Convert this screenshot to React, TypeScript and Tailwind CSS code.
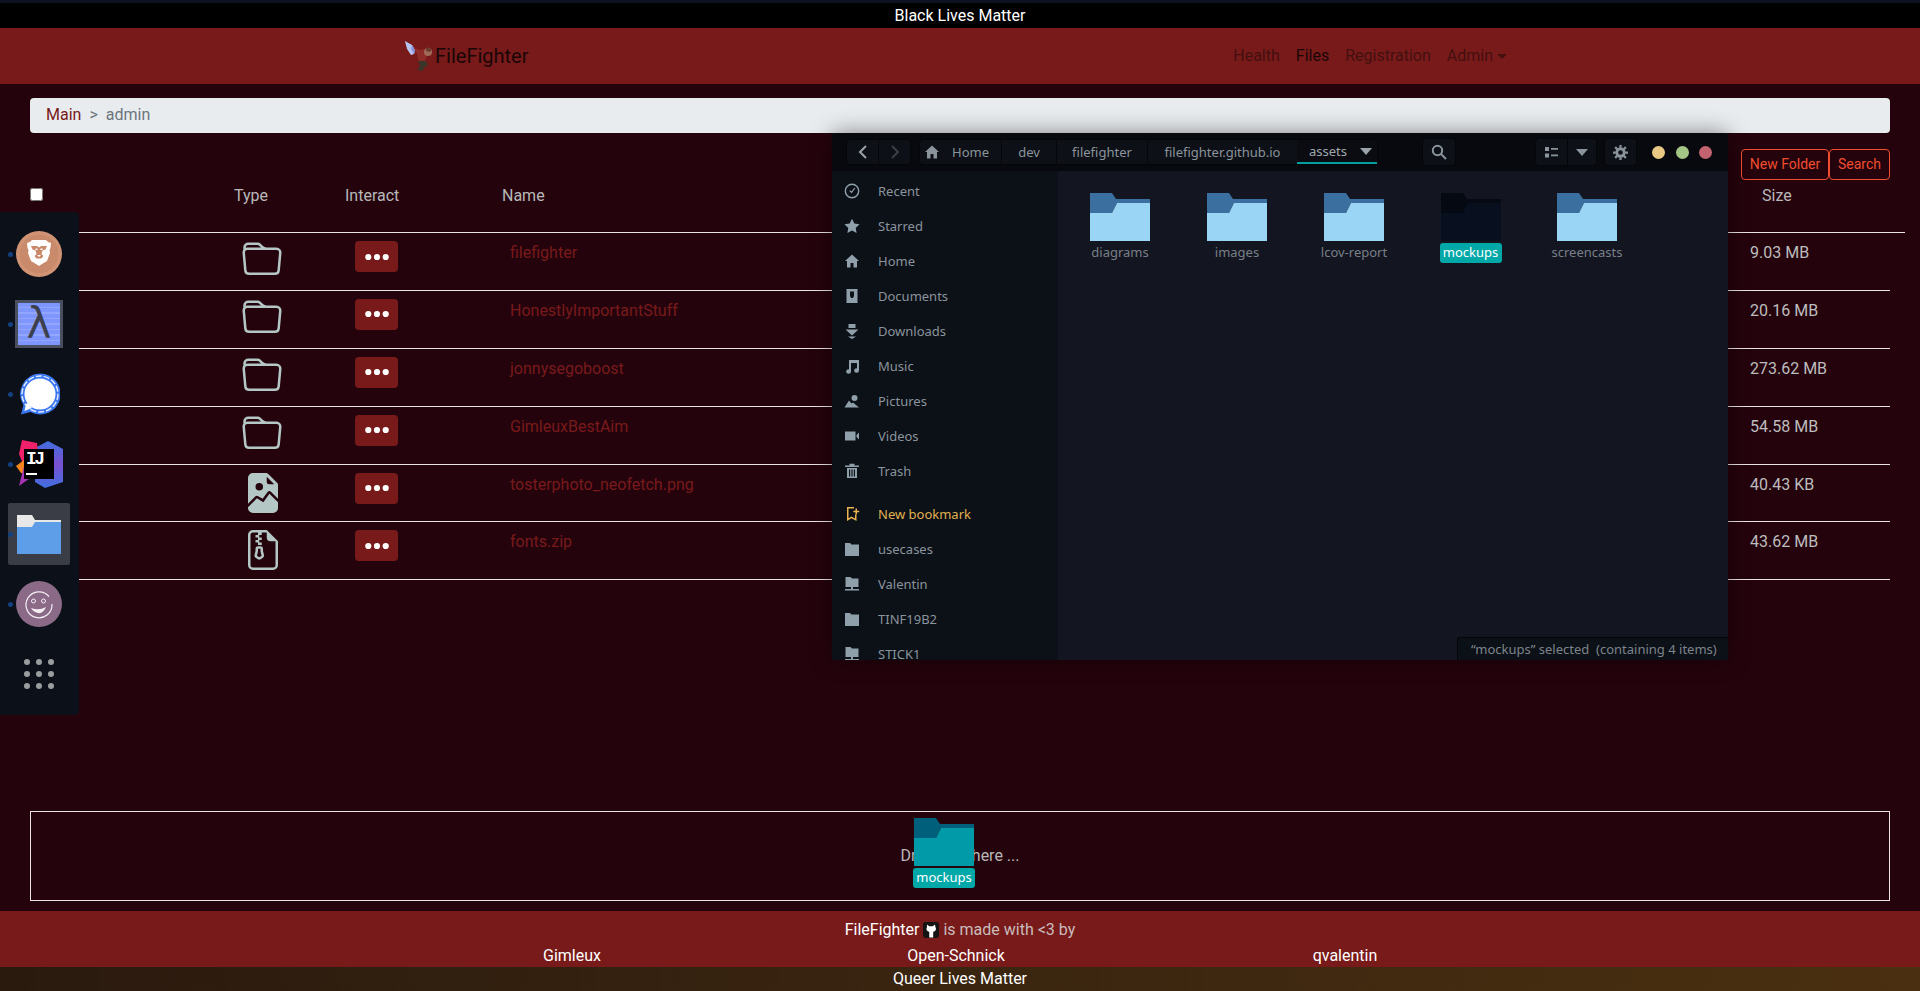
import React from 'react';
import { BsFolder, BsFileEarmarkImageFill, BsFileEarmarkZip } from 'react-icons/bs';

const rows = [
  { name: 'filefighter', size: '9.03 MB', type: 'folder' },
  { name: 'HonestlyImportantStuff', size: '20.16 MB', type: 'folder' },
  { name: 'jonnysegoboost', size: '273.62 MB', type: 'folder' },
  { name: 'GimleuxBestAim', size: '54.58 MB', type: 'folder' },
  { name: 'tosterphoto_neofetch.png', size: '40.43 KB', type: 'image' },
  { name: 'fonts.zip', size: '43.62 MB', type: 'zip' },
];

const FolderGlyph: React.FC<{ back: string; front: string }> = ({ back, front }) => (
  <svg width="60" height="48" viewBox="0 0 60 48" className="block">
    <polygon fill={back} points="0,0 22,0 26,6 60,6 60,10 27,10 22,20 0,20" />
    <polygon fill={front} points="0,20 22,20 27,10 60,10 60,48 0,48" />
  </svg>
);

const Glyph: React.FC<{ children: React.ReactNode; size?: number; color?: string }> = ({ children, size = 16, color = '#8fa0ab' }) => (
  <svg width={size} height={size} viewBox="0 0 16 16" fill={color} stroke="none" className="block">
    {children}
  </svg>
);

const HomePath = () => <path d="M8 1.5 1 8h2v6.5h3.5V10h3v4.5H13V8h2z" />;
const ServerPath = () => (
  <>
    <path d="M1.5 1h5l1.5 1.5h6.5V11h-13z" />
    <path d="M7 11h2v2H7zM1 13h14v1.5H1z" />
  </>
);

const sideTop: { label: string; icon: React.ReactNode }[] = [
  {
    label: 'Recent',
    icon: (
      <Glyph>
        <circle cx="8" cy="8" r="6.7" fill="none" stroke="#8fa0ab" strokeWidth="1.4" />
        <path d="M5.8 7.8 7.6 9.4 10.8 5" fill="none" stroke="#8fa0ab" strokeWidth="1.2" />
      </Glyph>
    ),
  },
  {
    label: 'Starred',
    icon: (
      <Glyph>
        <path d="M8 .8l2.3 4.8 5.2.7-3.8 3.6.9 5.2L8 12.6l-4.6 2.5.9-5.2L.5 6.3l5.2-.7z" />
      </Glyph>
    ),
  },
  { label: 'Home', icon: <Glyph><HomePath /></Glyph> },
  {
    label: 'Documents',
    icon: (
      <Glyph>
        <path d="M2.5 1h11v14h-11zM6 3.5v4.5l1 2h2l1-2V3.5z" fillRule="evenodd" />
      </Glyph>
    ),
  },
  {
    label: 'Downloads',
    icon: (
      <Glyph>
        <path d="M4.5 1h7v4h-7zM1.5 6.5h13L8 12.5zM4 13.5h8L8 16z" />
      </Glyph>
    ),
  },
  {
    label: 'Music',
    icon: (
      <Glyph>
        <path d="M5 2h10v10.5a2.4 2.2 0 1 1-2-2.1V5H7v8.5a2.4 2.2 0 1 1-2-2.1z" />
      </Glyph>
    ),
  },
  {
    label: 'Pictures',
    icon: (
      <Glyph>
        <circle cx="10.5" cy="5" r="3" />
        <path d="M.5 14.5 5 7.5l2.5 3 1.5-1 6 5z" />
      </Glyph>
    ),
  },
  {
    label: 'Videos',
    icon: (
      <Glyph>
        <path d="M1 3.5h10.5v9H1zM12.5 7l2.5-2.5v7L12.5 9z" />
      </Glyph>
    ),
  },
  {
    label: 'Trash',
    icon: (
      <Glyph>
        <path d="M1 2.5h14v1.4H1zM5.5.8h5v1.7h-5z" />
        <path d="M3 5h10v10H3zM5 6.5v7h1.2v-7zM7.4 6.5v7h1.2v-7zM9.8 6.5v7H11v-7z" fillRule="evenodd" />
      </Glyph>
    ),
  },
];

const sideBottom: { label: string; icon: React.ReactNode; gold?: boolean }[] = [
  {
    label: 'New bookmark',
    gold: true,
    icon: (
      <Glyph color="#e8b450">
        <path d="M3 1h7v1.5H4.5v9.7L7.5 10.5l3.5 2V8.5h1.5V15L7.5 12.3 3 15z" />
        <path d="M11.5 2.5H13v2.2h2.2v1.5H13v2.3h-1.5V6.2H9.3V4.7h2.2z" />
      </Glyph>
    ),
  },
  {
    label: 'usecases',
    icon: (
      <Glyph>
        <path d="M1 2h5l1.5 1.5H15V15H1z" />
      </Glyph>
    ),
  },
  { label: 'Valentin', icon: <Glyph><ServerPath /></Glyph> },
  {
    label: 'TINF19B2',
    icon: (
      <Glyph>
        <path d="M1 2h5l1.5 1.5H15V15H1z" />
      </Glyph>
    ),
  },
  { label: 'STICK1', icon: <Glyph><ServerPath /></Glyph> },
];

const folders = [
  { name: 'diagrams', cell: 'w-[117px] flex flex-col items-center' },
  { name: 'images', cell: 'w-[117px] flex flex-col items-center' },
  { name: 'lcov-report', cell: 'w-[117px] flex flex-col items-center' },
  { name: 'mockups', selected: true, cell: 'w-[116px] flex flex-col items-center' },
  { name: 'screencasts', cell: 'w-[117px] flex flex-col items-center' },
];

const crumbs = ['dev', 'filefighter', 'filefighter.github.io'];

const FileWindow: React.FC = () => (
  <div className="absolute left-[832px] top-[133px] w-[896px] h-[527px] flex flex-col bg-[#131620] shadow-[0_0_22px_rgba(0,0,0,0.45)] rounded-t-[3px] overflow-hidden font-['Noto_Sans',sans-serif] text-[13px] text-[#8a949c]">
    <div className="h-[38px] shrink-0 flex items-center pl-[14px] bg-[#08090e]">
      <div className="w-[65px] h-[26px] flex rounded-[4px] bg-[#0d1016] border border-[#05060a]">
        <div className="w-[32px] flex items-center justify-center border-r border-[#05060a]">
          <svg width="10" height="14" viewBox="0 0 10 14" fill="none" stroke="#9aa3aa" strokeWidth="2"><path d="M8 1 2 7l6 6" /></svg>
        </div>
        <div className="flex-1 flex items-center justify-center">
          <svg width="10" height="14" viewBox="0 0 10 14" fill="none" stroke="#3a4048" strokeWidth="2"><path d="M2 1l6 6-6 6" /></svg>
        </div>
      </div>
      <div className="ml-[8px] w-[459px] h-[26px] flex rounded-[4px] bg-[#0d1016] border border-[#05060a] leading-[24px]">
        <div className="w-[82px] flex items-center pl-[4px] gap-[12px] border-r border-[#05060a]">
          <Glyph size={16} color="#8a949c"><HomePath /></Glyph>
          <span>Home</span>
        </div>
        {crumbs.map((c, i) => (
          <div
            key={c}
            className={
              i === 0
                ? 'w-[55px] text-center border-r border-[#05060a]'
                : i === 1
                ? 'w-[91px] text-center border-r border-[#05060a]'
                : 'w-[149px] text-center'
            }
          >
            {c}
          </div>
        ))}
        <div className="flex-1 flex items-center justify-between pl-[12px] pr-[4px] bg-[#0a0c11] border-b-2 border-[#00a0a0] text-[#a0a8ae]">
          <span>assets</span>
          <svg width="12" height="7" viewBox="0 0 12 7" fill="#9aa3aa" className="mr-[1px]"><path d="M0 0h12L6 7z" /></svg>
        </div>
      </div>
      <div className="ml-[44px] w-[34px] h-[28px] flex items-center justify-center rounded-[4px] bg-[#0d1016] border border-[#05060a]">
        <svg width="16" height="16" viewBox="0 0 16 16" fill="none" stroke="#8a949c" strokeWidth="2"><circle cx="6.5" cy="6.5" r="4.7" /><path d="M10 10l5 5" /></svg>
      </div>
      <div className="ml-[79px] w-[62px] h-[28px] flex rounded-[4px] bg-[#0d1016] border border-[#05060a]">
        <div className="w-[32px] flex items-center justify-center border-r border-[#05060a]">
          <svg width="13" height="11" viewBox="0 0 13 11" fill="#8a949c"><path d="M0 0h4v4H0zM0 6.5h4v4H0zM6 1h7v1.7H6zM6 7.5h7v1.7H6z" /></svg>
        </div>
        <div className="flex-1 flex items-center justify-center">
          <svg width="12" height="7" viewBox="0 0 12 7" fill="#8a949c"><path d="M0 0h12L6 7z" /></svg>
        </div>
      </div>
      <div className="ml-[7px] w-[33px] h-[28px] flex items-center justify-center rounded-[4px] bg-[#0d1016] border border-[#05060a]">
        <svg width="15" height="15" viewBox="0 0 16 16" fill="none" stroke="#8a949c"><circle cx="8" cy="8" r="4" strokeWidth="3" /><path d="M8 0v3M8 13v3M0 8h3M13 8h3M2.3 2.3l2.2 2.2M11.5 11.5l2.2 2.2M2.3 13.7l2.2-2.2M11.5 4.5l2.2-2.2" strokeWidth="2.4" /></svg>
      </div>
      <div className="ml-[15px] flex gap-[10.5px]">
        <span className="w-[13px] h-[13px] rounded-full bg-[#e8c882]" />
        <span className="w-[13px] h-[13px] rounded-full bg-[#a3c585]" />
        <span className="w-[13px] h-[13px] rounded-full bg-[#c26470]" />
      </div>
    </div>
    <div className="flex-1 flex min-h-0">
      <div className="w-[226px] shrink-0 bg-[#0c1017] pt-[2.5px] overflow-hidden">
        {sideTop.map(item => (
          <div key={item.label} className="h-[35px] flex items-center pl-[12px] gap-[18px]">
            {item.icon}
            <span className="pt-[2px]">{item.label}</span>
          </div>
        ))}
        <div className="mt-[8px]">
          {sideBottom.map(item => (
            <div key={item.label} className="h-[35px] flex items-center pl-[12px] gap-[18px]">
              {item.icon}
              <span className={item.gold ? 'pt-[2px] text-[#e0b050]' : 'pt-[2px]'}>{item.label}</span>
            </div>
          ))}
        </div>
      </div>
      <div className="relative flex-1 pt-[22px] pl-[3.5px] flex items-start">
        {folders.map(f => (
          <div key={f.name} className={f.cell}>
            <FolderGlyph back={f.selected ? '#050912' : '#3b6f9f'} front={f.selected ? '#081020' : '#9bd5f5'} />
            <span
              className={
                f.selected
                  ? 'mt-[2px] h-[20px] w-[62px] leading-[19px] text-center rounded-[3px] bg-[#00a8a8] text-white'
                  : 'mt-[2px] h-[20px] leading-[19px] text-[#787f88]'
              }
            >
              {f.name}
            </span>
          </div>
        ))}
        <div className="absolute right-0 bottom-0 w-[271px] h-[23px] pl-[13px] leading-[22px] text-[13px] bg-[#0c1017] border-l border-t border-[#05060a] rounded-tl-[3px] text-[#7d848c] whitespace-nowrap">
          “mockups” selected&nbsp; (containing 4 items)
        </div>
      </div>
    </div>
  </div>
);

const DockSlot: React.FC<{ children: React.ReactNode; active?: boolean }> = ({ children, active }) => (
  <div className="relative h-[70px] w-[78px] flex items-center justify-center">
    {active && <div className="absolute left-[8px] top-[4px] w-[62px] h-[62px] rounded-[2px] bg-[#3a3c46]" />}
    <span className="absolute left-[8px] top-[32.5px] w-[5px] h-[5px] rounded-full bg-[#14407f] z-10" />
    <div className="relative">{children}</div>
  </div>
);

const Dock: React.FC = () => (
  <div className="absolute left-0 top-[212px] w-[79px] h-[503px] pt-[7px] bg-[#0c1018] rounded-r-[4px]">
    <DockSlot>
      <svg width="46" height="46" viewBox="0 0 46 46" className="block">
        <circle cx="23" cy="23" r="23" fill="#d09474" />
        <circle cx="23" cy="23" r="19.5" fill="#c98a6b" />
        <path d="M16 9h14l2 2 3 1-.5 5-1 2 .5 3-3 8-5 3-3 2-3-2-5-3-3-8 .5-3-1-2-.5-5 3-1z" fill="#fff" />
        <path d="M15 15h6l2 1.500 2-1.500h6l-1.500 3.500-3 1-1 3.500 2 2-2 2.500h-5l-2-2.500 2-2-1-3.500-3-1z" fill="#c98a6b" />
        <path d="M19.500 17.500h2v1.500h-2zM24.500 17.500h2v1.500h-2zM21 24h4l-2 2z" fill="#fff" />
      </svg>
    </DockSlot>
    <DockSlot>
      <div className="w-[48px] h-[48px] border-[3px] border-[#4a4f60] bg-[repeating-linear-gradient(180deg,#7f96ff_0,#7f96ff_4px,#93a6ff_4px,#93a6ff_5.5px)] flex items-center justify-center text-[42px] leading-none text-[#3c3f4c] font-['DejaVu_Sans',sans-serif]">
        λ
      </div>
    </DockSlot>
    <DockSlot>
      <svg width="42" height="42" viewBox="0 0 42 42" className="block">
        <path d="M22 0.500a20.500 20.500 0 1 1-9.500 38.600L3 41.500l2.400-9.500A20.500 20.500 0 0 1 22 0.500z" fill="#3a76f0" />
        <circle cx="22" cy="21" r="18" fill="none" stroke="#dfe9ff" strokeWidth="1.500" strokeDasharray="6 2" />
        <circle cx="22" cy="21" r="15.500" fill="#fff" />
        <path d="M6.500 38 8 31l2-1 4 5z" fill="#fff" />
      </svg>
    </DockSlot>
    <DockSlot>
      <div className="relative w-[48px] h-[48px]">
        <svg width="48" height="48" viewBox="0 0 48 48" className="absolute inset-0">
          <defs>
            <linearGradient id="ijBlue" x1="0" y1="0" x2="0" y2="1">
              <stop offset="0" stopColor="#3f6fe0" />
              <stop offset="0.5" stopColor="#7a4fd0" />
              <stop offset="1" stopColor="#3f6fe0" />
            </linearGradient>
          </defs>
          <polygon points="33,1 48,9 48,42 30,48 20,42 20,8" fill="url(#ijBlue)" />
          <polygon points="7,0 22,3 24,20 8,24 4,14" fill="#f0206a" />
          <polygon points="1,26 9,20 10,34 6,33" fill="#f7851e" />
          <polygon points="4,46 9,26 18,36" fill="#a535b5" />
        </svg>
        <div className="absolute left-[9px] top-[9px] w-[30px] h-[30px] bg-black text-white font-['Liberation_Mono',monospace] font-bold text-[18px] tracking-[-2.5px] leading-[16px] pl-[2px] pt-[2px]">
          IJ
          <div className="w-[11px] h-[1.5px] mt-[6px] bg-white" />
        </div>
      </div>
    </DockSlot>
    <DockSlot active>
      <svg width="44" height="39" viewBox="0 0 44 39" className="block">
        <polygon fill="#e8e8e8" points="0,0 15,0 18,5 44,5 44,7 15,12 0,12" />
        <polygon fill="#5e9ee8" points="0,12 15,12 18,7 44,7 44,39 0,39" />
      </svg>
    </DockSlot>
    <DockSlot>
      <svg width="46" height="46" viewBox="0 0 46 46" className="block">
        <circle cx="23" cy="23" r="23" fill="#8b6a88" />
        <path d="M33 15.500A13 13 0 1 0 36 23" fill="none" stroke="#f4eef4" strokeWidth="1.200" />
        <circle cx="17.500" cy="20" r="2" fill="none" stroke="#f4eef4" />
        <circle cx="27.500" cy="20" r="2" fill="none" stroke="#f4eef4" />
        <path d="M15 27q8 3 15-1q-3 7-8 6q-5-1-7-5z" fill="#f4eef4" />
      </svg>
    </DockSlot>
    <div className="h-[70px] flex items-center justify-center w-[78px]">
      <div className="grid grid-cols-3 gap-[6px]">
        {Array.from({ length: 9 }).map((_, i) => (
          <span key={i} className="w-[6px] h-[6px] rounded-full bg-[#9a9c9e]" />
        ))}
      </div>
    </div>
  </div>
);

const Logo: React.FC = () => (
  <svg width="30" height="30" viewBox="0 0 30 30" className="block">
    <polygon points="0,0 7,4 10,9 9,13 6,14 2,8" fill="#b8c4f0" />
    <polygon points="7,4 10,9 9,13 6,8" fill="#8793d8" />
    <polygon points="9,7 15,9 19,8 22,14 20,20 14,20 12,13" fill="#8e2c28" />
    <circle cx="23" cy="11" r="4" fill="#a06a58" />
    <polygon points="21,6 27,8 25,11 21,10" fill="#6a3a2c" />
    <polygon points="13,20 21,20 23,25 19,26 18,30 12,29 15,25" fill="#3a3528" />
  </svg>
);

export default function App() {
  return (
    <div className="relative h-[991px] overflow-hidden flex flex-col bg-[#25030d] font-['Roboto',sans-serif] text-[16px] text-white">
      <div className="h-[28px] shrink-0 border-t-[3px] border-[#0d1220] bg-black text-center leading-[25px]">Black Lives Matter</div>
      <nav className="h-[56px] shrink-0 flex items-center bg-[#781a1a] pl-[405px] pr-[413px]">
        <Logo />
        <span className="text-[20px] text-[#1a0606]">FileFighter</span>
        <div className="ml-auto flex gap-[16px] text-[#43100f]">
          <span>Health</span>
          <span className="text-[#1a0606]">Files</span>
          <span>Registration</span>
          <span className="flex items-center gap-[4px]">
            Admin
            <span className="w-0 h-0 border-x-[5px] border-x-transparent border-t-[5px] border-t-[#43100f]" />
          </span>
        </div>
      </nav>
      <main className="flex-1 flex flex-col px-[30px]">
        <div className="mt-[14px] h-[35px] shrink-0 flex items-center px-[16px] pb-[1px] rounded-[4px] bg-[#e9ecef]">
          <span className="text-[#781a1a]">Main</span>
          <span className="ml-[8px] text-[#6c757d]">&gt;</span>
          <span className="ml-[8px] text-[#6c757d]">admin</span>
        </div>
        <div className="mt-[16px] flex justify-end text-[14px] text-[#f04e2e]">
          <button className="w-[88px] h-[31px] border border-[#f04e2e] rounded-[4px]">New Folder</button>
          <button className="w-[61px] h-[31px] border border-[#f04e2e] rounded-[4px]">Search</button>
        </div>
        <div className="-mr-[15px] h-[53px] pt-[4px] grid grid-cols-[204px_111px_157px_1fr_173px] border-b border-[#e8e4e4] text-[#b8b8b8]">
          <div className="pt-[4px]"><input type="checkbox" className="block w-[13px] h-[13px]" /></div>
          <div>Type</div>
          <div>Interact</div>
          <div>Name</div>
          <div className="pl-[30px]">Size</div>
        </div>
        {rows.map(r => (
          <div key={r.name} className="h-[57.9px] grid grid-cols-[205px_110px_158px_1fr_158px] border-b border-[#e8e4e4]">
            <div />
            <div className={r.type === 'folder' ? 'pl-[6.5px] pt-[7px] text-[#b5c7c5]' : 'pl-[7.5px] pt-[8px] text-[#b5c7c5]'}>
              {r.type === 'folder' && <BsFolder size={40} />}
              {r.type === 'image' && <BsFileEarmarkImageFill size={40} />}
              {r.type === 'zip' && <BsFileEarmarkZip size={40} />}
            </div>
            <div className="pl-[10px] pt-[8px]">
              <div className="w-[43px] h-[31px] rounded-[4px] bg-[#781a1a] flex items-center justify-center">
                <svg width="24" height="8" viewBox="0 0 24 8" fill="#fff" className="block">
                  <circle cx="3.300" cy="4" r="3.100" />
                  <circle cx="12" cy="4" r="3.100" />
                  <circle cx="20.700" cy="4" r="3.100" />
                </svg>
              </div>
            </div>
            <div className="pl-[7px] pt-[8px] text-[#781a1a]">{r.name}</div>
            <div className="pl-[18px] pt-[8px] text-[#bdbdbd]">{r.size}</div>
          </div>
        ))}
        <div className="mt-auto mb-[10px] h-[90px] shrink-0 flex items-center justify-center border border-[#e8e4e4] text-[#b8b8b8]">
          Drop files here ...
        </div>
      </main>
      <footer className="h-[56px] shrink-0 bg-[#781a1a] flex flex-col items-center">
        <div className="h-[38px] flex items-center gap-[4px]">
          <span>FileFighter</span>
          <span className="w-[16px] h-[16px] rounded-[3px] bg-[#141414] flex items-center justify-center">
            <svg width="14" height="15" viewBox="0 0 16 16" fill="#fff" className="block">
              <path d="M3.500 1l2.500 2h4l2.500-2 .7 3.500c.7 1 .7 2.800-.3 3.800-.7.700-1.600 1-2.400 1.100V16H6V9.400c-.8-.1-1.700-.4-2.400-1.100-1-1-1-2.800-.3-3.800z" />
            </svg>
          </span>
          <span className="text-[#c9bcbc]">is made with &lt;3 by</span>
        </div>
        <div className="-mt-[2px] ml-[2px] grid grid-cols-[383px_385px_393px] text-center leading-[18px]">
          <span>Gimleux</span>
          <span>Open-Schnick</span>
          <span>qvalentin</span>
        </div>
      </footer>
      <div className="h-[24px] shrink-0 bg-gradient-to-r from-[#2a1a0e] to-[#4a3010] text-center leading-[24px]">Queer Lives Matter</div>

      <Dock />
      <FileWindow />
      <div className="absolute left-[913px] top-[818px] flex flex-col items-center font-['Noto_Sans',sans-serif] text-[13px]">
        <FolderGlyph back="#005f7a" front="#009aa8" />
        <span className="mt-[2px] h-[20px] w-[62px] leading-[19px] text-center rounded-[3px] bg-[#00a8a8]">mockups</span>
      </div>
    </div>
  );
}
